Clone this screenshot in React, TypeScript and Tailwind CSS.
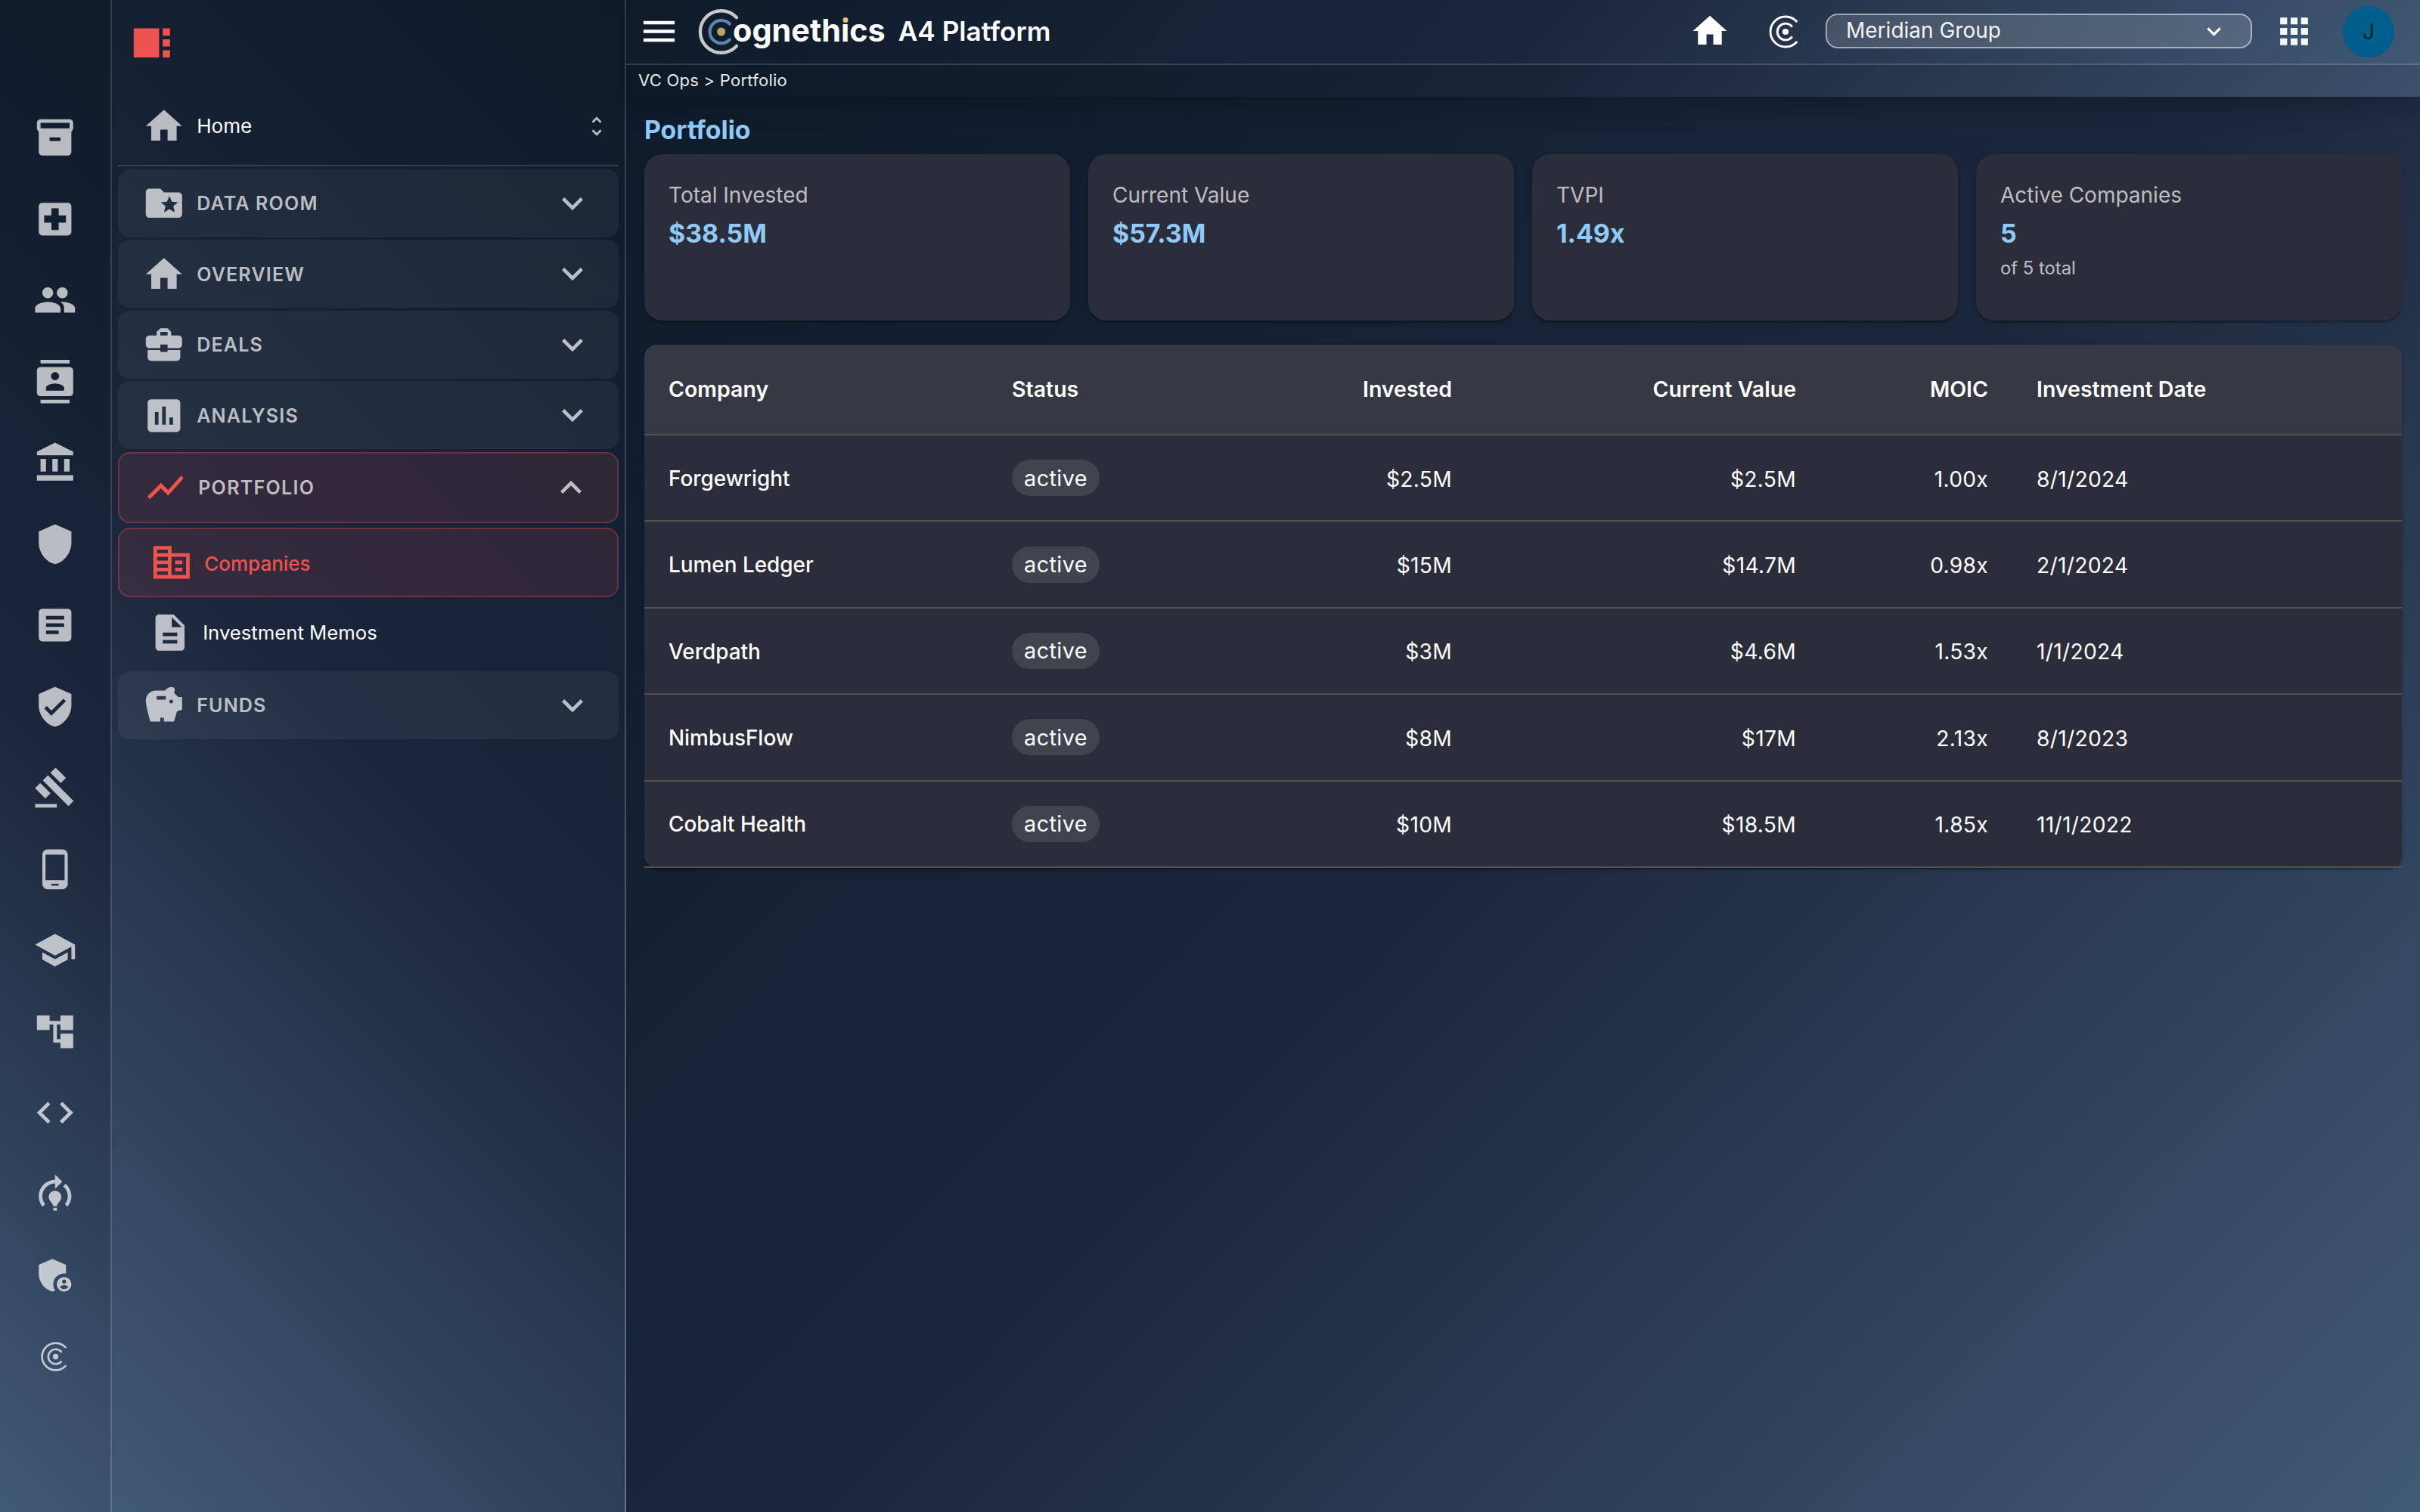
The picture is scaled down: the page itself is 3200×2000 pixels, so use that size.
import type { ReactNode } from "react";
import type { IconType } from "react-icons";
import {
  MdAccountBalance,
  MdAccountTree,
  MdAdminPanelSettings,
  MdApps,
  MdArticle,
  MdAssessment,
  MdBusinessCenter,
  MdCode,
  MdContacts,
  MdCorporateFare,
  MdDescription,
  MdExpandLess,
  MdExpandMore,
  MdFolderSpecial,
  MdGavel,
  MdHome,
  MdInventory2,
  MdLocalHospital,
  MdMenu,
  MdModelTraining,
  MdPeople,
  MdPhoneAndroid,
  MdSavings,
  MdSchool,
  MdShield,
  MdShowChart,
  MdUnfoldMore,
  MdVerifiedUser,
  MdViewSidebar,
} from "react-icons/md";

const railIcons: IconType[] = [
  MdInventory2,
  MdLocalHospital,
  MdPeople,
  MdContacts,
  MdAccountBalance,
  MdShield,
  MdArticle,
  MdVerifiedUser,
  MdGavel,
  MdPhoneAndroid,
  MdSchool,
  MdAccountTree,
  MdCode,
  MdModelTraining,
  MdAdminPanelSettings,
];

const stats = [
  { label: "Total Invested", value: "$38.5M" },
  { label: "Current Value", value: "$57.3M" },
  { label: "TVPI", value: "1.49x" },
  { label: "Active Companies", value: "5", note: "of 5 total" },
];

const companies = [
  { name: "Forgewright", invested: "$2.5M", current: "$2.5M", moic: "1.00x", date: "8/1/2024" },
  { name: "Lumen Ledger", invested: "$15M", current: "$14.7M", moic: "0.98x", date: "2/1/2024" },
  { name: "Verdpath", invested: "$3M", current: "$4.6M", moic: "1.53x", date: "1/1/2024" },
  { name: "NimbusFlow", invested: "$8M", current: "$17M", moic: "2.13x", date: "8/1/2023" },
  { name: "Cobalt Health", invested: "$10M", current: "$18.5M", moic: "1.85x", date: "11/1/2022" },
];

const columns = "grid grid-cols-[454px_320px_326px_455px_254px_1fr] items-center";

function CognethicsMark({ className }: { className?: string }) {
  return (
    <svg viewBox="0 0 48 48" fill="none" stroke="currentColor" strokeWidth="2.9" strokeLinecap="round" className={className}>
      <path d="M38.6 10.3A20 20 0 1 0 38.6 37.7" />
      <path d="M32.2 16.7A10.9 10.9 0 1 0 32.2 31.3" />
      <circle cx="24" cy="24" r="4.1" fill="currentColor" stroke="none" />
    </svg>
  );
}

function Logo() {
  return (
    <div className="flex items-center">
      <svg viewBox="0 0 56 60" fill="none" strokeLinecap="round" className="h-[60px] w-[56px]">
        <path d="M50.9 11.1A27.7 27.7 0 1 0 50.9 48.9" stroke="#c8c8cc" strokeWidth="4.4" />
        <path d="M41.8 19.5A15.2 15.2 0 1 0 41.8 40.5" stroke="#5f84ae" strokeWidth="4.2" />
        <circle cx="30.7" cy="30" r="5.5" fill="#b9a46c" />
      </svg>
      <span className="-ml-[10px] pb-[3px] text-[41.4px] leading-[57px] font-bold text-white">
        ogneth
        <span className="relative">
          ı
          <span className="absolute top-[8px] left-1/2 size-[7px] -translate-x-1/2 rounded-full bg-[#e9c47c]" />
        </span>
        cs
      </span>
    </div>
  );
}

function Rail() {
  return (
    <nav className="flex w-[148px] shrink-0 flex-col items-center border-r-2 border-white/15 bg-[linear-gradient(225deg,#0d1b2a_0%,#1b263b_50%,#415a77_100%)] pt-[128.5px] text-white/70">
      {railIcons.map((Icon, i) => (
        <div key={i} className="flex h-[107.5px] items-center">
          <Icon className="size-[57.6px]" />
        </div>
      ))}
      <div className="flex h-[107.5px] items-center">
        <CognethicsMark className="size-[43px]" />
      </div>
    </nav>
  );
}

function Group({ icon: Icon, label }: { icon: IconType; label: string }) {
  return (
    <div className="mb-[3.6px] flex h-[89.9px] items-center rounded-2xl bg-white/5 pr-[33px] pl-8 text-white/70">
      <Icon className="size-[57.6px]" />
      <span className="ml-[14.6px] flex-1 pt-[2px] text-[25px] font-semibold tracking-[1.2px]">{label}</span>
      <MdExpandMore className="size-14" />
    </div>
  );
}

function Sidebar() {
  return (
    <aside className="flex w-[680px] shrink-0 flex-col border-r-2 border-white/15 bg-[linear-gradient(225deg,#0d1b2a_0%,#1b263b_50%,#415a77_100%)] px-2 pt-[28px]">
      <MdViewSidebar className="ml-4 size-[57.6px] text-[#ef5350]" />
      <div className="mt-[30.4px] mb-1 flex h-[104px] items-center border-b-2 border-white/15 pr-3 pl-8">
        <MdHome className="size-[57.6px] text-white/70" />
        <span className="ml-[14.6px] flex-1 text-[26.1px] text-white">Home</span>
        <MdUnfoldMore className="size-[34px] text-white/70" />
      </div>

      <Group icon={MdFolderSpecial} label="DATA ROOM" />
      <Group icon={MdHome} label="OVERVIEW" />
      <Group icon={MdBusinessCenter} label="DEALS" />
      <Group icon={MdAssessment} label="ANALYSIS" />

      <div className="mb-[6px] flex h-[94px] items-center rounded-2xl border-2 border-[#ef5350]/30 bg-[#ef5350]/12 pr-[33px] pl-8">
        <MdShowChart className="size-[57.6px] text-[#ef5350]" />
        <span className="ml-[14.6px] flex-1 pt-px text-[25px] font-semibold tracking-[1.3px] text-white/70">PORTFOLIO</span>
        <MdExpandLess className="size-14 text-white/70" />
      </div>
      <div className="flex h-[92px] items-center rounded-2xl border-2 border-[#ef5350]/30 bg-[#ef5350]/12 pl-10 text-[#ef5350]">
        <MdCorporateFare className="size-[57.6px]" />
        <span className="ml-[14.6px] pt-[3px] text-[26px] font-medium">Companies</span>
      </div>
      <div className="flex h-[98px] items-center pb-1 pl-10">
        <MdDescription className="size-[57.6px] text-white/70" />
        <span className="ml-[14.6px] text-[25.7px] text-white">Investment Memos</span>
      </div>

      <Group icon={MdSavings} label="FUNDS" />
    </aside>
  );
}

function Header() {
  return (
    <header className="relative z-10 bg-[linear-gradient(135deg,#0d1b2a_0%,#1b263b_50%,#415a77_100%)] shadow-[0_8px_32px_rgba(0,0,0,0.25)]">
      <div className="flex h-[86px] items-center border-b-2 border-white/15 pr-[34px] pl-4 text-white">
        <MdMenu className="mb-px size-[55px]" />
        <div className="ml-[24px]">
          <Logo />
        </div>
        <span className="ml-[17px] flex-1 pb-[2px] text-[35.2px] font-semibold">A4 Platform</span>

        <MdHome className="mb-[2px] size-[54px]" />
        <CognethicsMark className="ml-[49px] size-12" />
        <div className="mb-[2px] ml-[29px] flex h-[46px] w-[564px] items-center justify-between rounded-2xl border-2 border-white/50 bg-white/15 pr-[30px] pl-[25px]">
          <span className="pb-[2px] text-[28px] text-white/95">Meridian Group</span>
          <MdExpandMore className="size-[37px]" />
        </div>
        <MdApps className="mb-px ml-[28px] size-[55px] text-white/95" />
        <div className="ml-[37px] flex size-[68px] items-center justify-center rounded-full bg-[#005e8c] text-[28px] text-[#15202e]">
          J
        </div>
      </div>
      <div className="flex h-[42px] items-center bg-black/10 pb-[2px] pl-4 text-[22px] tracking-[0.25px] text-white/90">
        VC Ops &gt; Portfolio
      </div>
    </header>
  );
}

function StatCard({ label, value, note }: { label: string; value: string; note?: string }) {
  return (
    <div className="h-[220px] rounded-3xl bg-[#2b2e3a] px-8 pt-8 shadow-[0_4px_2px_-2px_rgba(0,0,0,0.2),0_2px_2px_rgba(0,0,0,0.14),0_2px_6px_rgba(0,0,0,0.12)]">
      <div className="text-[28px] leading-[44px] text-white/70">{label}</div>
      <div className="mt-[5px] text-[33.9px] leading-[47px] font-bold text-[#90caf9]">{value}</div>
      {note && <div className="mt-1 text-[23.8px] leading-[38px] text-white/70">{note}</div>}
    </div>
  );
}

function HeadCell({ children, right }: { children: ReactNode; right?: boolean }) {
  return <div className={right ? "px-8 pt-px text-right" : "px-8 pt-px"}>{children}</div>;
}

function CompaniesTable() {
  return (
    <div className="mt-8 rounded-2xl bg-[#2b2e3a] text-white shadow-[0_4px_2px_-2px_rgba(0,0,0,0.2),0_2px_2px_rgba(0,0,0,0.14),0_2px_6px_rgba(0,0,0,0.12)]">
      <div className={`${columns} h-[120px] rounded-t-2xl border-b-2 border-[#515151] bg-white/5 text-[28.5px] font-semibold`}>
        <HeadCell>Company</HeadCell>
        <HeadCell>Status</HeadCell>
        <HeadCell right>Invested</HeadCell>
        <HeadCell right>Current Value</HeadCell>
        <HeadCell right>MOIC</HeadCell>
        <HeadCell>Investment Date</HeadCell>
      </div>
      {companies.map((c) => (
        <div key={c.name} className={`${columns} h-[114.4px] border-b-2 border-[#515151] text-[28.2px] tracking-[0.3px]`}>
          <div className="px-8 pt-[3px] text-[27.9px] font-medium tracking-normal">{c.name}</div>
          <div className="px-8">
            <span className="flex h-12 w-[116px] items-center justify-center rounded-full bg-[#40444f] text-[28.8px] tracking-[0.4px]">
              active
            </span>
          </div>
          <div className="px-8 pt-[3px] text-right">{c.invested}</div>
          <div className="px-8 pt-[3px] text-right">{c.current}</div>
          <div className="px-8 pt-[3px] text-right">{c.moic}</div>
          <div className="px-8 pt-[3px]">{c.date}</div>
        </div>
      ))}
    </div>
  );
}

export default function App() {
  return (
    <div className="flex h-[2000px] w-[3200px] overflow-hidden font-[Inter,sans-serif]">
      <Rail />
      <Sidebar />
      <div className="flex flex-1 flex-col">
        <Header />
        <main className="flex-1 bg-[linear-gradient(135deg,#0d1b2a_0%,#1b263b_50%,#415a77_100%)] px-6 pt-[18px]">
          <h1 className="text-[33.8px] leading-[52px] font-bold text-[#90caf9]">Portfolio</h1>
          <div className="mt-[6px] grid grid-cols-4 gap-6">
            {stats.map((s) => (
              <StatCard key={s.label} {...s} />
            ))}
          </div>
          <CompaniesTable />
        </main>
      </div>
    </div>
  );
}
